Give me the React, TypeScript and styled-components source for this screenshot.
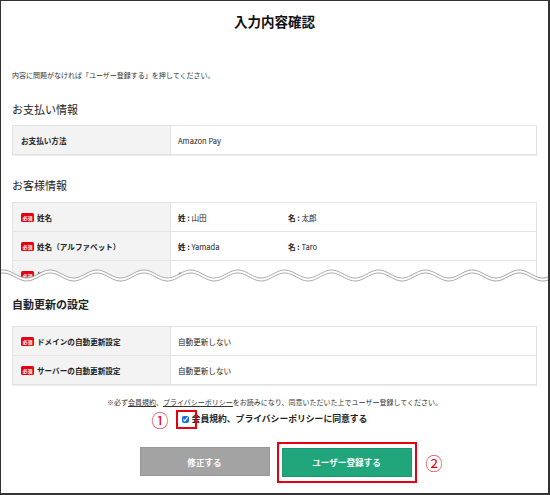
import React from "react";
import styled, { createGlobalStyle } from "styled-components";

const GlobalStyle = createGlobalStyle`
  html, body {
    margin: 0;
    padding: 0;
    background: #fff;
  }
  body {
    font-family: "Noto Sans CJK JP", "Noto Sans", sans-serif;
    color: #222;
  }
`;

const Frame = styled.div`
  width: 550px;
  height: 495px;
  box-sizing: border-box;
  border: 1px solid #333;
  border-right-width: 2px;
  border-bottom-width: 2px;
  background: #fff;
  overflow: hidden;
`;

const Cut = styled.div`
  position: relative;
  height: 283px;
  overflow: hidden;
  padding: 0 11px;
`;

const WaveSvg = styled.svg`
  position: absolute;
  left: 0;
  bottom: 0;
  width: 100%;
  height: 16px;
`;

const Lower = styled.div`
  padding: 0 11px;
`;

const Title = styled.h1`
  margin: 0;
  padding-top: 10px;
  font-size: 13.5px;
  line-height: 20px;
  font-weight: 700;
  text-align: center;
  color: #111;
`;

const Desc = styled.p`
  margin: 39px 0 0;
  font-size: 7px;
  line-height: 10px;
  color: #333;
`;

const Heading = styled.h2<{ $bold?: boolean; $top: number }>`
  margin: ${p => p.$top}px 0 0;
  font-size: 11px;
  line-height: 16px;
  font-weight: ${p => (p.$bold ? 700 : 400)};
  color: #222;
`;

const Table = styled.div<{ $top: number }>`
  margin-top: ${p => p.$top}px;
  border: 1px solid #e2e2e2;
  box-shadow: 0 1px 0 #ececec;
`;

const Row = styled.div`
  display: grid;
  grid-template-columns: 158px 1fr;
  height: 28px;
  & + & {
    border-top: 1px solid #e4e4e4;
  }
`;

const Label = styled.div`
  display: flex;
  align-items: center;
  gap: 3px;
  padding-left: 8px;
  background: #f3f3f3;
  border-right: 1px solid #e2e2e2;
  font-size: 7.6px;
  font-weight: 700;
  color: #222;
`;

const Badge = styled.span`
  display: inline-flex;
  align-items: center;
  justify-content: center;
  width: 13px;
  height: 9px;
  border-radius: 1.5px;
  background: #e60012;
  color: #fff;
  font-size: 5px;
  font-weight: 700;
  line-height: 1;
`;

const Value = styled.div`
  display: flex;
  align-items: center;
  padding-left: 7px;
  font-size: 7.6px;
  color: #222;
`;

const Pair = styled.span`
  width: 110px;
`;

const Key = styled.b`
  font-weight: 700;
`;

const Note = styled.p`
  margin: 12px 0 0;
  font-size: 7px;
  line-height: 10px;
  text-align: center;
  color: #333;
`;

const Link = styled.span`
  text-decoration: underline;
`;

const AgreeRow = styled.div`
  margin-top: 5px;
  display: flex;
  justify-content: center;
  align-items: center;
  gap: 3px;
  height: 14px;
`;

const CheckWrap = styled.span`
  position: relative;
  display: inline-flex;
  align-items: center;
`;

const Check = styled.input`
  width: 7px;
  height: 7px;
  margin: 0;
  accent-color: #1a6fe0;
`;

const Marker = styled.span<{ $side: "left" | "right" }>`
  position: absolute;
  top: 50%;
  transform: translateY(-50%);
  ${p => (p.$side === "left" ? "left: -30px;" : "right: -31px;")}
  color: #e60012;
  font-size: 17px;
  line-height: 15px;
  font-family: "Noto Sans CJK JP", sans-serif;
`;

const RedBox = styled.span<{ $inset: string }>`
  position: absolute;
  inset: ${p => p.$inset};
  border: 2px solid #e60012;
  pointer-events: none;
`;

const AgreeText = styled.label`
  font-size: 8.8px;
  font-weight: 700;
  line-height: 14px;
  color: #222;
`;

const Buttons = styled.div`
  margin-top: 21px;
  display: flex;
  justify-content: center;
  gap: 12px;
  padding-left: 2px;
`;

const BtnWrap = styled.div`
  position: relative;
`;

const Button = styled.button<{ $primary?: boolean }>`
  width: 130px;
  height: 29px;
  border: 1px solid ${p => (p.$primary ? "#1b9670" : "#979797")};
  background: ${p => (p.$primary ? "#21a67c" : "#a3a3a3")};
  color: #fff;
  font-family: "Noto Sans CJK JP", sans-serif;
  font-size: 8.6px;
  font-weight: 700;
  padding: 0;
  cursor: pointer;
`;

const wavePath = (offset: number) => {
  const pts: string[] = [];
  for (let x = 0; x <= 560; x += 2) {
    const y = 6 + offset + 4 * Math.sin(((x - 14) / 47) * Math.PI * 2);
    pts.push(`${x},${y.toFixed(2)}`);
  }
  return pts;
};

const Wave = () => {
  const upper = wavePath(0);
  const lower = wavePath(3);
  return (
    <WaveSvg viewBox="0 0 548 16" preserveAspectRatio="none">
      <polygon points={[...upper, "560,16", "0,16"].join(" ")} fill="#fff" />
      <polyline points={upper.join(" ")} fill="none" stroke="#a6a6a6" strokeWidth="1" />
      <polyline points={lower.join(" ")} fill="none" stroke="#a6a6a6" strokeWidth="1" />
    </WaveSvg>
  );
};

const App: React.FC = () => (
  <>
    <GlobalStyle />
    <Frame>
      <Cut>
        <Title>入力内容確認</Title>
        <Desc>内容に問題がなければ「ユーザー登録する」を押してください。</Desc>

        <Heading $top={21}>お支払い情報</Heading>
        <Table $top={8}>
          <Row>
            <Label>お支払い方法</Label>
            <Value>Amazon Pay</Value>
          </Row>
        </Table>

        <Heading $top={22}>お客様情報</Heading>
        <Table $top={9}>
          <Row>
            <Label>
              <Badge>必須</Badge>姓名
            </Label>
            <Value>
              <Pair>
                <Key>姓 : </Key>山田
              </Pair>
              <Pair>
                <Key>名 : </Key>太郎
              </Pair>
            </Value>
          </Row>
          <Row>
            <Label>
              <Badge>必須</Badge>姓名（アルファベット）
            </Label>
            <Value>
              <Pair>
                <Key>姓 : </Key>Yamada
              </Pair>
              <Pair>
                <Key>名 : </Key>Taro
              </Pair>
            </Value>
          </Row>
          <Row>
            <Label>
              <Badge>必須</Badge>性別
            </Label>
            <Value>無し</Value>
          </Row>
        </Table>
        <Wave />
      </Cut>

      <Lower>
        <Heading $top={12} $bold>
          自動更新の設定
        </Heading>
        <Table $top={14}>
          <Row>
            <Label>
              <Badge>必須</Badge>ドメインの自動更新設定
            </Label>
            <Value>自動更新しない</Value>
          </Row>
          <Row>
            <Label>
              <Badge>必須</Badge>サーバーの自動更新設定
            </Label>
            <Value>自動更新しない</Value>
          </Row>
        </Table>

        <Note>
          ※必ず<Link>会員規約</Link>、<Link>プライバシーポリシー</Link>
          をお読みになり、同意いただいた上でユーザー登録してください。
        </Note>

        <AgreeRow>
          <CheckWrap>
            <Marker $side="left">①</Marker>
            <Check type="checkbox" id="agree" defaultChecked />
            <RedBox $inset="-6px -8px -6px -6px" />
          </CheckWrap>
          <AgreeText htmlFor="agree">会員規約、プライバシーポリシーに同意する</AgreeText>
        </AgreeRow>

        <Buttons>
          <Button>修正する</Button>
          <BtnWrap>
            <Button $primary>ユーザー登録する</Button>
            <RedBox $inset="-5px -5px -6px -5px" />
            <Marker $side="right">②</Marker>
          </BtnWrap>
        </Buttons>
      </Lower>
    </Frame>
  </>
);

export default App;
